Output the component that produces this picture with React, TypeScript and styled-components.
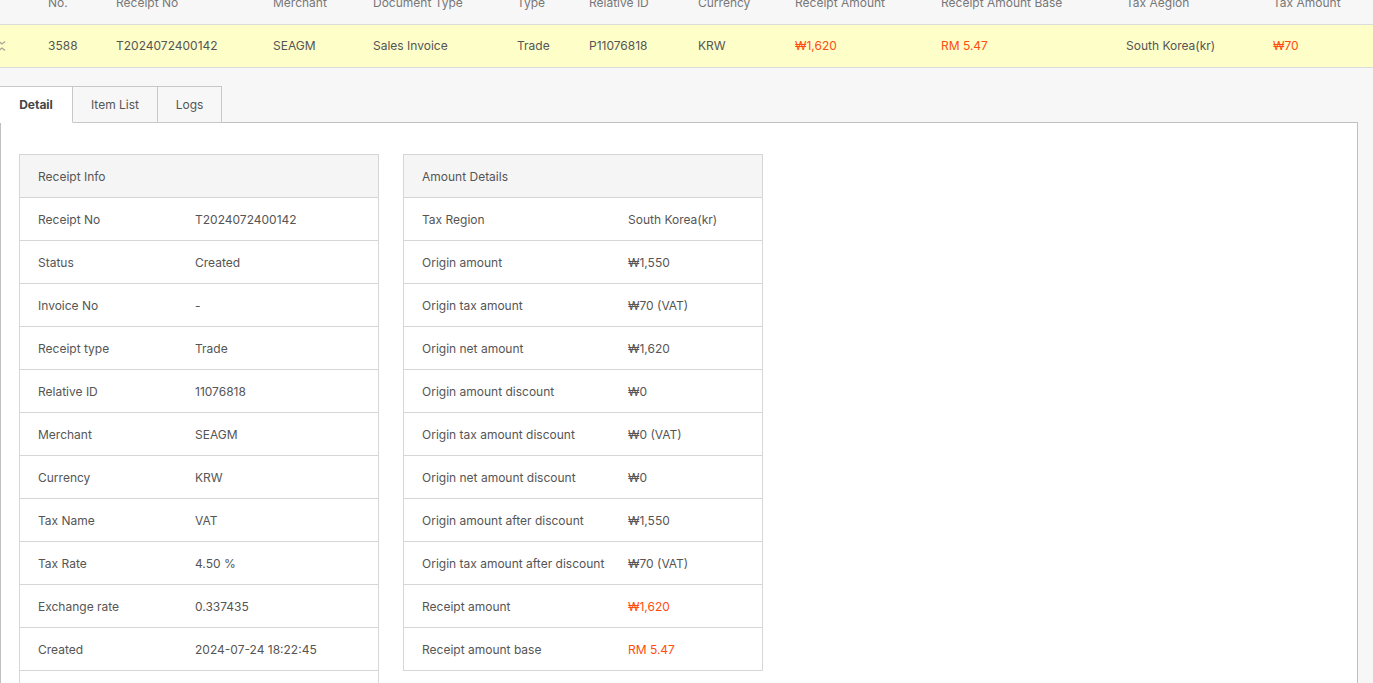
import React from 'react';
import styled, { createGlobalStyle } from 'styled-components';

const GlobalStyle = createGlobalStyle`
  html, body {
    margin: 0;
    padding: 0;
    background: #f7f7f7;
    font-family: Inter, 'Noto Sans', sans-serif;
    color: #555;
    overflow: hidden;
  }
`;

const columns = [
  { title: '', width: 48 },
  { title: 'No.', width: 68 },
  { title: 'Receipt No', width: 157 },
  { title: 'Merchant', width: 100 },
  { title: 'Document Type', width: 144 },
  { title: 'Type', width: 72 },
  { title: 'Relative ID', width: 109 },
  { title: 'Currency', width: 97 },
  { title: 'Receipt Amount', width: 146 },
  { title: 'Receipt Amount Base', width: 185 },
  { title: 'Tax Aegion', width: 147 },
  { title: 'Tax Amount', width: 100 },
];

const gridCols = columns.map(c => `${c.width}px`).join(' ');

type Cell = { text: string; accent?: boolean };

const rowCells: Cell[] = [
  { text: '3588' },
  { text: 'T2024072400142' },
  { text: 'SEAGM' },
  { text: 'Sales Invoice' },
  { text: 'Trade' },
  { text: 'P11076818' },
  { text: 'KRW' },
  { text: '₩1,620', accent: true },
  { text: 'RM 5.47', accent: true },
  { text: 'South Korea(kr)' },
  { text: '₩70', accent: true },
];

const receiptInfo: [string, string][] = [
  ['Receipt No', 'T2024072400142'],
  ['Status', 'Created'],
  ['Invoice No', '-'],
  ['Receipt type', 'Trade'],
  ['Relative ID', '11076818'],
  ['Merchant', 'SEAGM'],
  ['Currency', 'KRW'],
  ['Tax Name', 'VAT'],
  ['Tax Rate', '4.50 %'],
  ['Exchange rate', '0.337435'],
  ['Created', '2024-07-24 18:22:45'],
  ['', ''],
];

const amountDetails: [string, string, boolean?][] = [
  ['Tax Region', 'South Korea(kr)'],
  ['Origin amount', '₩1,550'],
  ['Origin tax amount', '₩70 (VAT)'],
  ['Origin net amount', '₩1,620'],
  ['Origin amount discount', '₩0'],
  ['Origin tax amount discount', '₩0 (VAT)'],
  ['Origin net amount discount', '₩0'],
  ['Origin amount after discount', '₩1,550'],
  ['Origin tax amount after discount', '₩70 (VAT)'],
  ['Receipt amount', '₩1,620', true],
  ['Receipt amount base', 'RM 5.47', true],
];

// chevrons pointing at each other (collapse)
const CollapseIcon = () => (
  <svg width="8" height="12" viewBox="0 0 8 12" fill="none" stroke="#a8a890" strokeWidth="1.3">
    <polyline points="1,1.5 4,4 7,1.5" />
    <polyline points="1,10.5 4,8 7,10.5" />
  </svg>
);

const App: React.FC = () => {
  return (
    <>
      <GlobalStyle />
      <Page>
        <Table>
          <HeaderRow>
            {columns.map((c, i) => (
              <HeadCell key={i}>{c.title}</HeadCell>
            ))}
          </HeaderRow>
          <DataRow>
            <IconCell>
              <CollapseIcon />
            </IconCell>
            {rowCells.map((c, i) => (
              <DataCell key={i} accent={c.accent}>
                {c.text}
              </DataCell>
            ))}
          </DataRow>
        </Table>

        <Tabs>
          <Tab active width={73}>Detail</Tab>
          <Tab width={85}>Item List</Tab>
          <Tab width={64}>Logs</Tab>
        </Tabs>

        <Panel>
          <Card>
            <CardHeader>Receipt Info</CardHeader>
            {receiptInfo.map(([label, value], i) => (
              <InfoRow key={i} labelWidth={157}>
                <Label>{label}</Label>
                <Value>{value}</Value>
              </InfoRow>
            ))}
          </Card>
          <Card>
            <CardHeader>Amount Details</CardHeader>
            {amountDetails.map(([label, value, accent], i) => (
              <InfoRow key={i} labelWidth={206}>
                <Label>{label}</Label>
                <Value accent={accent}>{value}</Value>
              </InfoRow>
            ))}
          </Card>
        </Panel>
      </Page>
    </>
  );
};

const Page = styled.div`
  width: 1373px;
  height: 683px;
  overflow: hidden;
`;

const Table = styled.div`
  margin-top: -19px;
`;

const HeaderRow = styled.div`
  display: grid;
  grid-template-columns: ${gridCols};
  height: 43px;
  align-items: center;
  border-bottom: 1px solid #dcdcdc;
`;

const HeadCell = styled.div`
  font-size: 12px;
  color: #777;
  white-space: nowrap;
`;

const DataRow = styled.div`
  display: grid;
  grid-template-columns: ${gridCols};
  height: 42px;
  align-items: center;
  background: #fefec9;
  border-bottom: 1px solid #dcdcdc;
`;

const IconCell = styled.div`
  display: flex;
  margin-left: -2px;
`;

const DataCell = styled.div<{ accent?: boolean }>`
  font-size: 12px;
  color: ${({ accent }) => (accent ? '#ff4d0f' : '#555')};
  white-space: nowrap;
  margin-top: -1px;
`;

const Tabs = styled.div`
  display: flex;
  margin-top: 18px;
  position: relative;
  z-index: 1;
`;

const Tab = styled.div<{ active?: boolean; width: number }>`
  width: ${({ width }) => width}px;
  height: 37px;
  display: flex;
  align-items: center;
  justify-content: center;
  box-sizing: border-box;
  white-space: nowrap;
  font-size: 12px;
  font-weight: ${({ active }) => (active ? 700 : 400)};
  color: ${({ active }) => (active ? '#444' : '#555')};
  background: ${({ active }) => (active ? '#fff' : '#f7f7f7')};
  border-top: 1px solid #c8c8c8;
  border-right: 1px solid #c8c8c8;
  border-bottom: 1px solid ${({ active }) => (active ? '#fff' : '#c8c8c8')};
`;

const Panel = styled.div`
  width: 1358px;
  height: 600px;
  box-sizing: border-box;
  margin-top: -1px;
  background: #fff;
  border: 1px solid #c0c0c0;
  padding: 31px 18px;
  display: flex;
  align-items: flex-start;
  gap: 24px;
`;

const Card = styled.div`
  width: 360px;
  box-sizing: border-box;
  border: 1px solid #d6d6d6;
  border-bottom: none;
`;

const CardHeader = styled.div`
  height: 43px;
  display: flex;
  align-items: center;
  padding-left: 18px;
  background: #f5f5f5;
  font-size: 12px;
  color: #555;
  border-bottom: 1px solid #d6d6d6;
  box-sizing: border-box;
`;

const InfoRow = styled.div<{ labelWidth: number }>`
  display: grid;
  grid-template-columns: ${({ labelWidth }) => labelWidth}px 1fr;
  height: 43px;
  align-items: center;
  padding-left: 18px;
  border-bottom: 1px solid #d6d6d6;
  box-sizing: border-box;
`;

const Label = styled.div`
  font-size: 12px;
  color: #555;
  white-space: nowrap;
`;

const Value = styled.div<{ accent?: boolean }>`
  font-size: 12px;
  color: ${({ accent }) => (accent ? '#ff4d0f' : '#555')};
  white-space: nowrap;
`;

export default App;
